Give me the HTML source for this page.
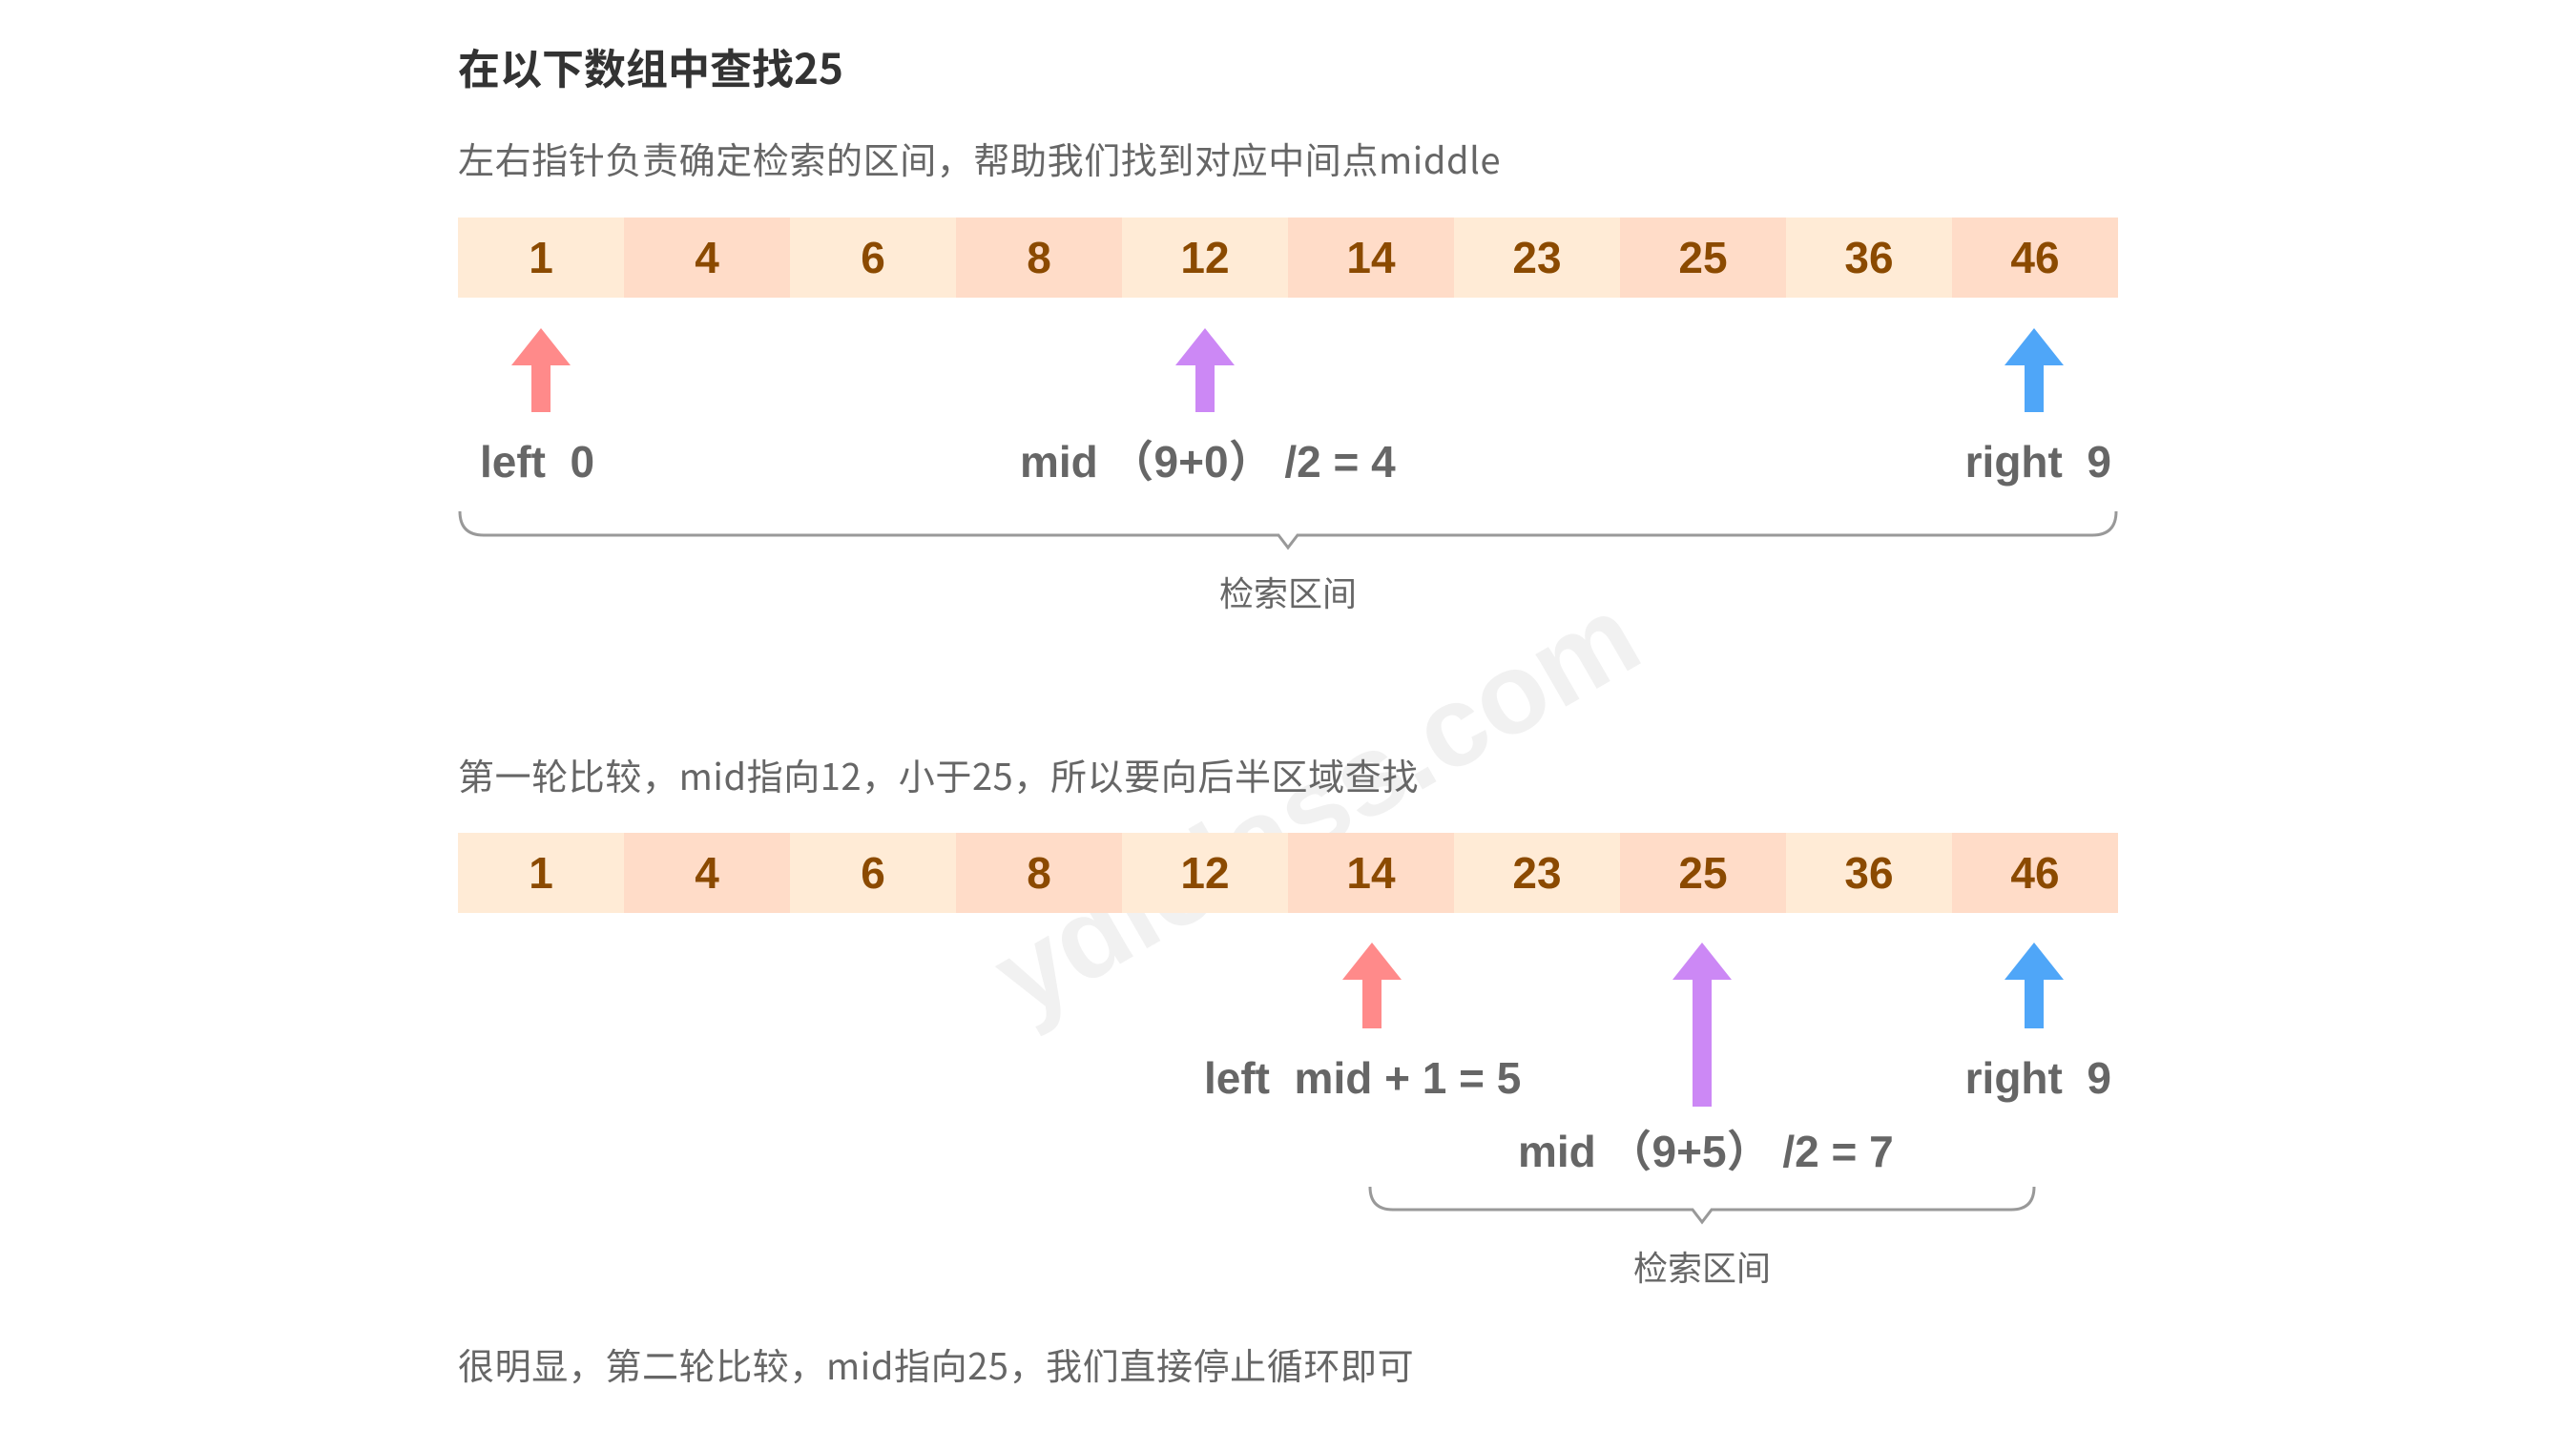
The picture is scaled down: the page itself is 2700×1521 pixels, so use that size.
<!DOCTYPE html>
<html><head><meta charset="utf-8">
<style>
*{margin:0;padding:0;box-sizing:border-box}
body{width:2700px;height:1521px;background:#fff;position:relative;overflow:hidden;font-family:"Liberation Sans","Noto Sans CJK SC",sans-serif}
.t{position:absolute;white-space:nowrap;line-height:1}
.cjk{font-family:"Noto Sans CJK SC","Liberation Sans",sans-serif}
.title{left:480px;top:47px;font-size:44px;font-weight:bold;color:#333}
.sub{font-size:38px;letter-spacing:0.6px;color:#666;left:480px}
.arr{position:absolute;left:480px;display:flex;height:84px}
.arr div{width:174px;height:100%;display:flex;align-items:center;justify-content:center;font-size:46px;font-weight:bold;color:#8B4A00}
.arr div:nth-child(odd){background:#FFEBD6}
.arr div:nth-child(even){background:#FFDCC8}
.lbl{font-size:46px;font-weight:bold;color:#666}
.cap{font-size:36px;color:#666}
</style></head><body>
<div class="t title cjk">在以下数组中查找25</div>
<div class="t sub cjk" style="top:147px">左右指针负责确定检索的区间，帮助我们找到对应中间点middle</div>
<div class="arr" style="top:228px"><div>1</div><div>4</div><div>6</div><div>8</div><div>12</div><div>14</div><div>23</div><div>25</div><div>36</div><div>46</div></div>

<svg width="2700" height="1521" style="position:absolute;left:0;top:0">
<g>
<text x="1400" y="880" transform="rotate(-30 1400 880)" text-anchor="middle" font-family="Liberation Sans" font-weight="bold" font-size="120" fill="#000" fill-opacity="0.055">ydlclass.com</text>
<polygon points="567,344 598,383 577,383 577,432 557,432 557,383 536,383" fill="#FF8A8A"/>
<polygon points="1263,344 1294,383 1273,383 1273,432 1253,432 1253,383 1232,383" fill="#CC88F5"/>
<polygon points="2132,344 2163,383 2142,383 2142,432 2122,432 2122,383 2101,383" fill="#4FA6F8"/>
<path d="M482,536 Q482,561 507,561 L1340,561 L1350,574 L1360,561 L2193,561 Q2218,561 2218,536" fill="none" stroke="#999" stroke-width="3"/>
<polygon points="1438,988 1469,1027 1448,1027 1448,1078 1428,1078 1428,1027 1407,1027" fill="#FF8A8A"/>
<polygon points="1784,988 1815,1027 1794,1027 1794,1160 1774,1160 1774,1027 1753,1027" fill="#CC88F5"/>
<polygon points="2132,988 2163,1027 2142,1027 2142,1078 2122,1078 2122,1027 2101,1027" fill="#4FA6F8"/>
<path d="M1436,1244 Q1436,1268 1460,1268 L1774,1268 L1784,1281 L1794,1268 L2108,1268 Q2132,1268 2132,1244" fill="none" stroke="#999" stroke-width="3"/>
</g>
</svg>

<div class="t lbl" style="left:503px;top:461px">left&nbsp; 0</div>
<div class="t lbl" style="left:1069px;top:461px">mid （9+0） /2 = 4</div>
<div class="t lbl" style="right:487px;top:461px">right&nbsp; 9</div>
<div class="t cap cjk" style="left:1278px;top:602px">检索区间</div>

<div class="t sub cjk" style="top:793px">第一轮比较，mid指向12，小于25，所以要向后半区域查找</div>
<div class="arr" style="top:873px"><div>1</div><div>4</div><div>6</div><div>8</div><div>12</div><div>14</div><div>23</div><div>25</div><div>36</div><div>46</div></div>

<div class="t lbl" style="left:1262px;top:1107px">left&nbsp; mid + 1 = 5</div>
<div class="t lbl" style="right:487px;top:1107px">right&nbsp; 9</div>
<div class="t lbl" style="left:1591px;top:1184px">mid （9+5） /2 = 7</div>
<div class="t cap cjk" style="left:1712px;top:1309px">检索区间</div>

<div class="t sub cjk" style="top:1411px">很明显，第二轮比较，mid指向25，我们直接停止循环即可</div>
</body></html>
